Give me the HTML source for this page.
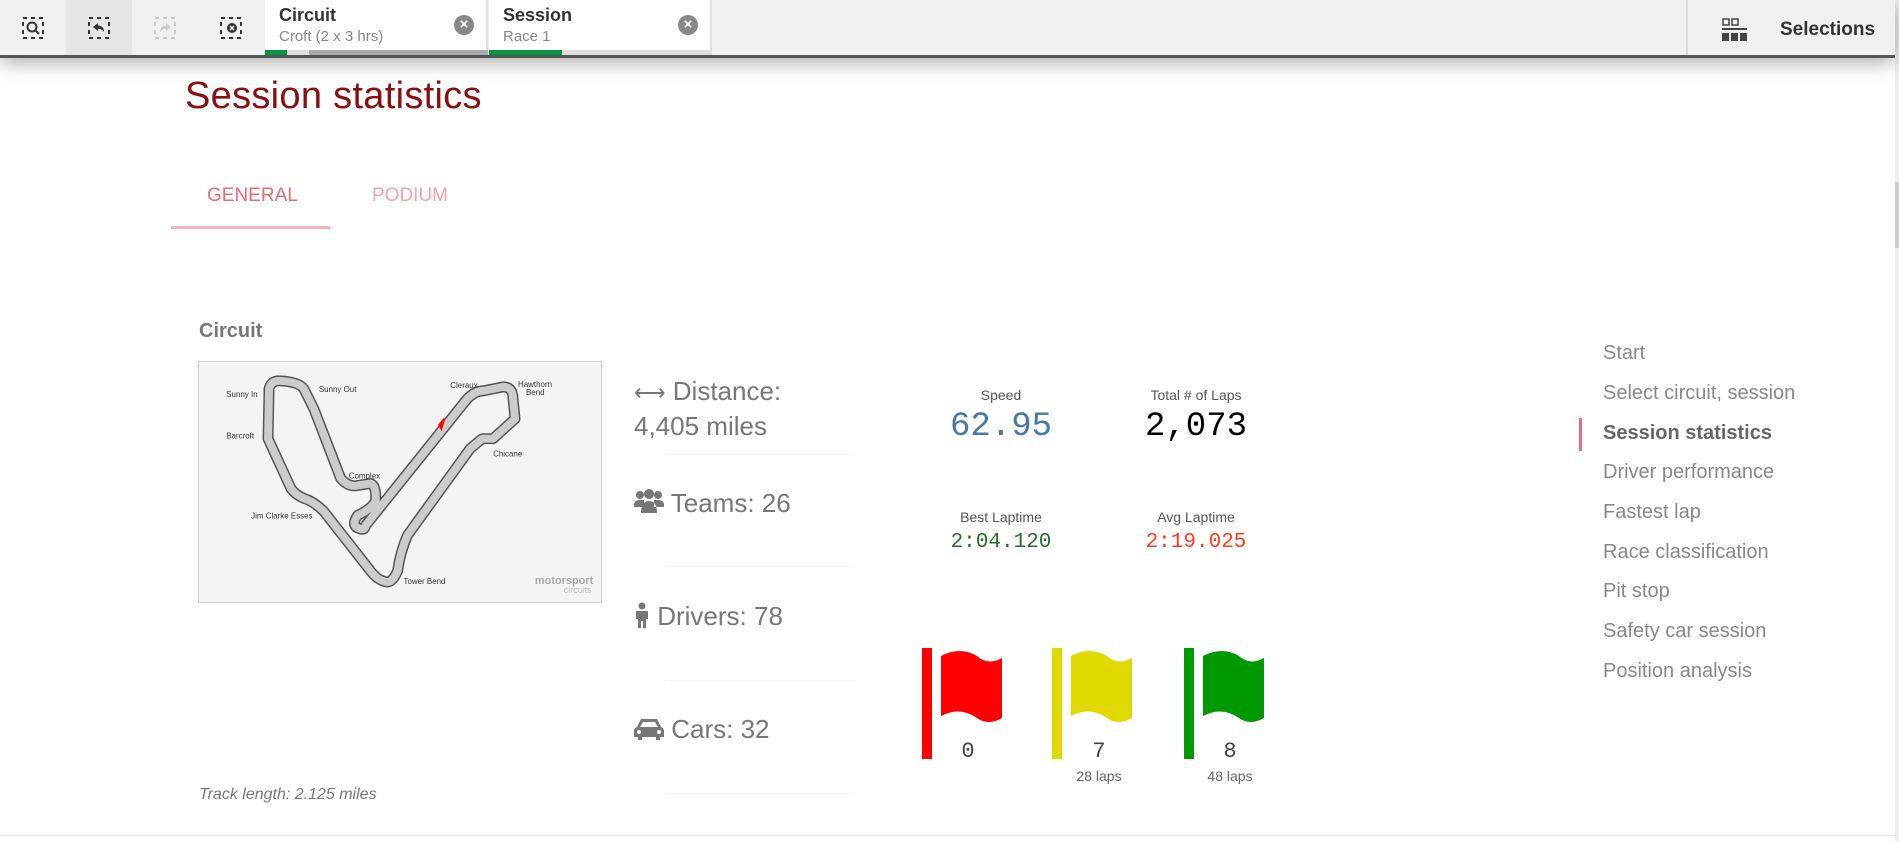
<!DOCTYPE html>
<html><head><meta charset="utf-8"><style>
*{margin:0;padding:0;box-sizing:border-box}
body{width:1899px;height:842px;overflow:hidden;background:#fff;font-family:"Liberation Sans",sans-serif;position:relative}
.abs{position:absolute}
.top{left:0;top:0;width:1895px;height:58px;background:#f0f0f0;border-bottom:3px solid #555;box-shadow:0 4px 20px rgba(0,0,0,.35);z-index:5}
.btn{position:absolute;top:0;width:66px;height:55px}
.tab{position:absolute;top:0;height:55px;background:#fff;border-right:2px solid #e0e0e0}
.tab .t{position:absolute;left:14px;top:5px;font-weight:bold;font-size:18px;color:#333}
.tab .s{position:absolute;left:14px;top:28px;font-size:15px;color:#888}
.tab .x{position:absolute;top:15px;width:20px;height:20px;border-radius:50%;background:#888;color:#fff;font-size:15px;line-height:20px;text-align:center;font-weight:bold}
.nav{position:absolute;left:1603px;font-size:20px;color:#888;font-weight:300}
.lbl{position:absolute;font-size:14px;color:#555;text-align:center;width:200px}
.mono{font-family:"Liberation Mono","DejaVu Sans Mono",monospace;position:absolute;text-align:center;width:240px}
.stat{position:absolute;left:634px;font-size:26px;color:#777}
.dot{position:absolute;left:664px;width:190px;border-top:1px dotted #eee}
</style></head><body>
<div class="abs top">
  <div class="btn" style="left:0"><svg class="abs" style="left:22px;top:17px" width="22" height="22"><rect x="1" y="1" width="20" height="20" fill="none" stroke="#333" stroke-width="2" stroke-dasharray="4 4"/><circle cx="10" cy="10" r="4.5" fill="none" stroke="#333" stroke-width="2"/><line x1="13" y1="13" x2="17" y2="17" stroke="#333" stroke-width="2"/></svg></div>
  <div class="btn" style="left:66px;background:#e6e6e6"><svg class="abs" style="left:22px;top:17px" width="22" height="22"><rect x="1" y="1" width="20" height="20" fill="none" stroke="#333" stroke-width="2" stroke-dasharray="4 4"/><path d="M5 10 L10 6 V8.5 C14 8.5 16 11 16 15 C14 12 12 12 10 12 V14 Z" fill="#333"/></svg></div>
  <div class="btn" style="left:132px"><svg class="abs" style="left:22px;top:17px" width="22" height="22"><rect x="1" y="1" width="20" height="20" fill="none" stroke="#ccc" stroke-width="2" stroke-dasharray="4 4"/><path d="M17 10 L12 6 V8.5 C8 8.5 6 11 6 15 C8 12 10 12 12 12 V14 Z" fill="#ccc"/></svg></div>
  <div class="btn" style="left:198px"><svg class="abs" style="left:22px;top:17px" width="22" height="22"><rect x="1" y="1" width="20" height="20" fill="none" stroke="#333" stroke-width="2" stroke-dasharray="4 4"/><circle cx="12" cy="11" r="5" fill="#333"/><path d="M10 9 L14 13 M14 9 L10 13" stroke="#fff" stroke-width="1.5"/></svg></div>
  <div class="tab" style="left:265px;width:223px"><div class="t">Circuit</div><div class="s">Croft (2 x 3 hrs)</div><div class="x" style="left:189px">×</div>
    <div class="abs" style="left:0;bottom:0;width:223px;height:5px;background:#ddd"></div><div class="abs" style="left:0;bottom:0;width:22px;height:5px;background:#009845"></div><div class="abs" style="left:44px;bottom:0;width:179px;height:5px;background:#aaa"></div></div>
  <div class="tab" style="left:489px;width:223px"><div class="t">Session</div><div class="s">Race 1</div><div class="x" style="left:189px">×</div>
    <div class="abs" style="left:0;bottom:0;width:223px;height:5px;background:#ddd"></div><div class="abs" style="left:0;bottom:0;width:73px;height:5px;background:#009845"></div></div>
  <div class="abs" style="left:1686px;top:0;width:2px;height:55px;background:#ddd"></div>
  <svg class="abs" style="left:1722px;top:18px" width="26" height="24"><rect x="1" y="1" width="6" height="6" fill="none" stroke="#444" stroke-width="1.5"/><rect x="10" y="1" width="6" height="6" fill="none" stroke="#444" stroke-width="1.5"/><rect x="0" y="10" width="25" height="2" fill="#444"/><rect x="0" y="15" width="7" height="8" fill="#444"/><rect x="9" y="15" width="7" height="8" fill="#444"/><rect x="18" y="15" width="7" height="8" fill="#444"/></svg>
  <div class="abs" style="left:1780px;top:19px;font-size:19px;font-weight:bold;color:#333">Selections</div>
</div>
<div class="abs" style="left:1895px;top:0;width:4px;height:842px;background:#f0f0f0"></div>
<div class="abs" style="left:1895px;top:182px;width:4px;height:66px;background:#ccc"></div>
<div class="abs" style="left:0;top:835px;width:1895px;height:1px;background:#e6e6e6"></div>

<div class="abs" style="left:185px;top:75px;font-family:'Liberation Sans',sans-serif;font-weight:300;font-size:38px;color:#8b0d0d;letter-spacing:0.3px">Session statistics</div>
<div class="abs" style="left:207px;top:185px;font-size:19px;color:#ec6b73">GENERAL</div>
<div class="abs" style="left:372px;top:185px;font-size:19px;color:#f4a3a8">PODIUM</div>
<div class="abs" style="left:171px;top:226px;width:159px;height:3px;background:#f7b2b5"></div>

<div class="abs" style="left:199px;top:320px;font-size:20px;font-weight:bold;color:#777">Circuit</div>
<div class="abs" style="left:198px;top:361px;width:404px;height:242px;background:#f4f4f4;border:1px solid #ccc">
<svg width="402" height="240" viewBox="0 0 403 241" style="font-family:'Liberation Sans',sans-serif">
<path d="M167 164 L269 37 Q277 29 285 29 L305 25 Q315 25 315 37 L317 57 L295 77 L284 77 L272 87 L209 174 Q202 190 199 210 Q193 224 185 220 Q178 218 172 210 L125 150 Q115 140 105 137 Q96 133 92 127 L69 77 L70 27 Q72 18 82 19 Q100 20 105 27 L115 47 L142 117 Q150 126 159 124 L172 122 Q178 124 177 140 Q172 148 159 154 Q152 164 160 167 Q166 170 167 164 Z" fill="none" stroke="#555" stroke-width="11" stroke-linejoin="round"/>
<path d="M167 164 L269 37 Q277 29 285 29 L305 25 Q315 25 315 37 L317 57 L295 77 L284 77 L272 87 L209 174 Q202 190 199 210 Q193 224 185 220 Q178 218 172 210 L125 150 Q115 140 105 137 Q96 133 92 127 L69 77 L70 27 Q72 18 82 19 Q100 20 105 27 L115 47 L142 117 Q150 126 159 124 L172 122 Q178 124 177 140 Q172 148 159 154 Q152 164 160 167 Q166 170 167 164 Z" fill="none" stroke="#ccc" stroke-width="8" stroke-linejoin="round"/>
<path d="M241 63 L246 57 L243 67 Z" fill="#f00" stroke="#f00" stroke-width="2"/>
<g font-size="8" fill="#333">
<text x="27" y="35">Sunny In</text><text x="120" y="30">Sunny Out</text><text x="27" y="77">Barcroft</text>
<text x="150" y="117">Complex</text><text x="52" y="157">Jim Clarke Esses</text><text x="205" y="223">Tower Bend</text>
<text x="252" y="26">Cleraux</text><text x="320" y="25">Hawthorn</text><text x="328" y="33">Bend</text><text x="295" y="95">Chicane</text></g>
<text x="337" y="223" font-size="11" font-weight="bold" fill="#aaa">motorsport</text>
<text x="366" y="232" font-size="9" fill="#bbb">circuits</text>
</svg></div>
<div class="abs" style="left:199px;top:786px;font-size:16px;font-style:italic;color:#777">Track length: 2.125 miles</div>

<div class="stat" style="top:376px"><span style="font-size:22px">⟷</span> Distance:</div>
<div class="stat" style="top:411px">4,405 miles</div>
<div class="dot" style="top:454px"></div>
<div class="stat" style="top:488px"><svg width="30" height="26" style="vertical-align:-3px" viewBox="0 0 30 26"><circle cx="6" cy="6" r="4" fill="#777"/><circle cx="24" cy="6" r="4" fill="#777"/><circle cx="15" cy="5" r="5" fill="#777"/><path d="M0 16 Q0 11 6 11 L10 11 L10 18 L0 18Z M30 16 Q30 11 24 11 L20 11 L20 18 L30 18Z M7 24 Q7 12 15 12 Q23 12 23 24Z" fill="#777"/></svg> Teams: 26</div>
<div class="dot" style="top:566px"></div>
<div class="stat" style="top:601px"><svg width="16" height="26" style="vertical-align:-3px" viewBox="0 0 16 26"><circle cx="8" cy="4" r="3.5" fill="#777"/><path d="M2 9 H14 V17 H12 V26 H9 V19 H7 V26 H4 V17 H2Z" fill="#777"/></svg> Drivers: 78</div>
<div class="dot" style="top:680px"></div>
<div class="stat" style="top:714px"><svg width="30" height="24" style="vertical-align:-2px" viewBox="0 0 30 24"><path d="M7 3 H23 L27 11 Q30 12 30 15 V21 H26 V24 H22 V21 H8 V24 H4 V21 H0 V15 Q0 12 3 11Z M9 6 L6 11 H24 L21 6Z" fill="#777"/><circle cx="5" cy="16" r="2" fill="#fff"/><circle cx="25" cy="16" r="2" fill="#fff"/></svg> Cars: 32</div>
<div class="dot" style="top:793px"></div>

<div class="lbl" style="left:901px;top:387px">Speed</div>
<div class="mono" style="left:881px;top:408px;font-size:34px;color:#4477aa">62.95</div>
<div class="lbl" style="left:1096px;top:387px">Total # of Laps</div>
<div class="mono" style="left:1076px;top:408px;font-size:34px;color:#000">2,073</div>
<div class="lbl" style="left:901px;top:509px">Best Laptime</div>
<div class="mono" style="left:881px;top:531px;font-size:21px;color:#276e27">2:04.120</div>
<div class="lbl" style="left:1096px;top:509px">Avg Laptime</div>
<div class="mono" style="left:1076px;top:531px;font-size:21px;color:#ff3b1f">2:19.025</div>

<svg class="abs" style="left:920px;top:648px" width="360" height="140" viewBox="0 0 360 140">
<g><rect x="2" y="0" width="10" height="111" fill="#f00"/><path d="M21 8 Q40 -2 57 8 Q68 18 82 10 V70 Q68 78 57 70 Q40 58 21 68Z" fill="#f00"/></g>
<g transform="translate(130,0)"><rect x="2" y="0" width="10" height="111" fill="#e0d900"/><path d="M21 8 Q40 -2 57 8 Q68 18 82 10 V70 Q68 78 57 70 Q40 58 21 68Z" fill="#e0d900"/></g>
<g transform="translate(262,0)"><rect x="2" y="0" width="10" height="111" fill="#009900"/><path d="M21 8 Q40 -2 57 8 Q68 18 82 10 V70 Q68 78 57 70 Q40 58 21 68Z" fill="#009900"/></g>
</svg>
<div class="mono" style="left:848px;top:739px;font-size:22px;color:#444">0</div>
<div class="mono" style="left:979px;top:739px;font-size:22px;color:#444">7</div>
<div class="mono" style="left:1110px;top:739px;font-size:22px;color:#444">8</div>
<div class="lbl" style="left:999px;top:768px;color:#666">28 laps</div>
<div class="lbl" style="left:1130px;top:768px;color:#666">48 laps</div>

<div class="nav" style="top:342px">Start</div>
<div class="nav" style="top:382px">Select circuit, session</div>
<div class="nav" style="top:422px;font-weight:bold;color:#666">Session statistics</div>
<div class="abs" style="left:1579px;top:418px;width:3px;height:33px;background:#e8707a"></div>
<div class="nav" style="top:461px">Driver performance</div>
<div class="nav" style="top:501px">Fastest lap</div>
<div class="nav" style="top:541px">Race classification</div>
<div class="nav" style="top:580px">Pit stop</div>
<div class="nav" style="top:620px">Safety car session</div>
<div class="nav" style="top:660px">Position analysis</div>
</body></html>
